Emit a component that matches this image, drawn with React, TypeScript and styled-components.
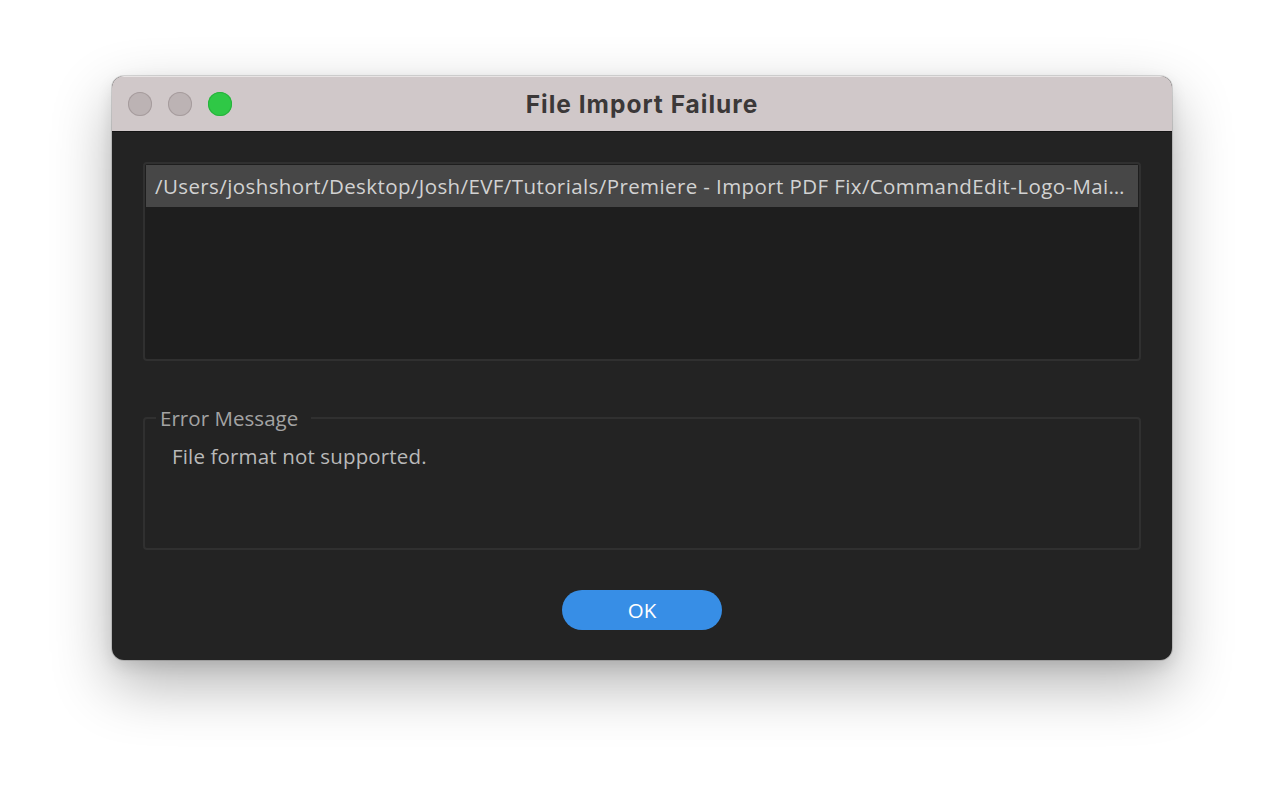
import React from "react";
import styled, { createGlobalStyle } from "styled-components";

const Global = createGlobalStyle`
  html, body { margin: 0; padding: 0; background: #ffffff; }
  body { width: 1284px; height: 808px; overflow: hidden; font-family: "Open Sans", "Noto Sans", sans-serif; }
`;

const Stage = styled.div`
  width: 1284px;
  height: 808px;
  display: flex;
  justify-content: center;
  padding-top: 76px;
  box-sizing: border-box;
  background: #ffffff;
`;

const Window = styled.div`
  width: 1060px;
  height: 584px;
  border-radius: 12px;
  overflow: hidden;
  display: flex;
  flex-direction: column;
  background: #232323;
  box-shadow: 0 0 0 1px rgba(0, 0, 0, 0.13), 0 24px 60px rgba(0, 0, 0, 0.3), 0 6px 16px rgba(0, 0, 0, 0.1);
`;

const TitleBar = styled.div`
  height: 56px;
  flex: none;
  background: #d0c8c9;
  border-bottom: 1px solid #141414;
  display: grid;
  grid-template-columns: 1fr auto 1fr;
  align-items: center;
  padding: 0 16px;
  box-sizing: border-box;
  box-shadow: inset 0 1px 0 rgba(255, 255, 255, 0.5);
`;

const Lights = styled.div`
  display: flex;
  gap: 16px;
  align-items: center;
`;

const Light = styled.span<{ $color: string; $edge: string }>`
  width: 24px;
  height: 24px;
  border-radius: 50%;
  background: ${(p) => p.$color};
  box-shadow: inset 0 0 0 1px ${(p) => p.$edge};
  box-sizing: border-box;
`;

const Title = styled.div`
  font-family: Inter, "Liberation Sans", sans-serif;
  font-weight: 700;
  font-size: 24.5px;
  color: #3b3838;
  letter-spacing: 1px;
  margin-top: 1px;
`;

const Body = styled.div`
  flex: 1;
  display: flex;
  flex-direction: column;
  padding: 30px 31px 30px;
  box-sizing: border-box;
`;

const List = styled.div`
  height: 199px;
  border: 2px solid #303030;
  border-radius: 4px;
  background: #1e1e1e;
  padding: 1px;
  box-sizing: border-box;
  flex: none;
`;

const Row = styled.div<{ $selected?: boolean }>`
  height: 42px;
  padding: 0 9px;
  background: ${(p) => (p.$selected ? "#474747" : "transparent")};
  color: #d2d2d2;
  font-size: 20.5px;
  white-space: nowrap;
  line-height: 42px;
  letter-spacing: 0.4px;
`;

const Group = styled.fieldset`
  margin: 43px 0 0;
  height: 146px;
  border: 2px solid #303030;
  border-radius: 4px;
  padding: 0 0 0 27px;
  box-sizing: border-box;
  min-width: 0;
  flex: none;
`;

const Legend = styled.legend`
  padding: 0 13px 0 4px;
  margin-left: -16px;
  color: #a3a3a3;
  font-size: 20.5px;
  letter-spacing: 0.05px;
`;

const Message = styled.div`
  color: #b9b9b9;
  font-size: 20.5px;
  letter-spacing: 0.15px;
  margin-top: 10px;
`;

const Footer = styled.div`
  flex: 1;
  display: flex;
  justify-content: center;
  align-items: flex-end;
`;

const OkButton = styled.button`
  width: 160px;
  height: 40px;
  border: none;
  border-radius: 20px;
  background: #378ee6;
  color: #ffffff;
  font-family: "Open Sans", "Noto Sans", sans-serif;
  font-size: 20.5px;
  cursor: pointer;
`;

export default function App() {
  return (
    <>
      <Global />
      <Stage>
        <Window>
          <TitleBar>
            <Lights>
              <Light $color="#bcb3b4" $edge="#a69c9d" />
              <Light $color="#bcb3b4" $edge="#a69c9d" />
              <Light $color="#2fc846" $edge="#27b23c" />
            </Lights>
            <Title>File Import Failure</Title>
            <div />
          </TitleBar>
          <Body>
            <List>
              <Row $selected>
                /Users/joshshort/Desktop/Josh/EVF/Tutorials/Premiere - Import PDF Fix/CommandEdit-Logo-Mai…
              </Row>
            </List>
            <Group>
              <Legend>Error Message</Legend>
              <Message>File format not supported.</Message>
            </Group>
            <Footer>
              <OkButton>OK</OkButton>
            </Footer>
          </Body>
        </Window>
      </Stage>
    </>
  );
}
